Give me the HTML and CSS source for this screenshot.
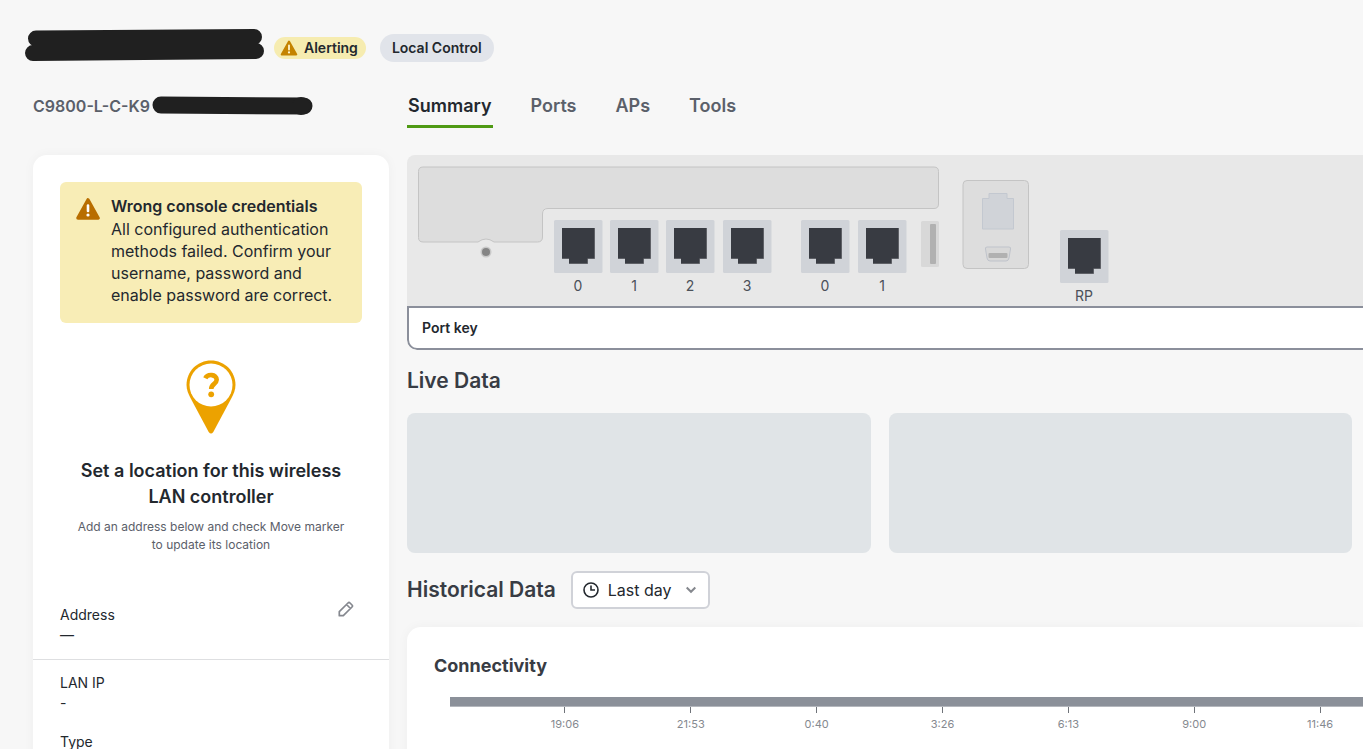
FILE: index.html
```html
<!DOCTYPE html>
<html lang="en">
<head>
    <meta charset="UTF-8">
    <meta name="viewport" content="width=device-width, initial-scale=1.0">
    <title>Wireless LAN controller</title>
    <link rel="stylesheet" href="styles.css">
</head>
<body>

    <div class="page">
        <header class="device-header">
            <svg class="device-name" width="240" height="40" viewBox="0 0 240 40" role="img" aria-label="Device name hidden">
                <path d="M11 10.500 L229 9 M8 25 L231 23" />
            </svg>
            <span class="badge badge-alert">
                <svg width="18" height="16" viewBox="0 0 18 16" aria-hidden="true">
                    <path d="M9 1.500 L16.300 14.500 H1.700 Z" fill="#c48300" stroke="#c48300" stroke-width="2" stroke-linejoin="round" />
                    <path d="M9 5.500 V9.500" stroke="#fff5cf" stroke-width="1.800" stroke-linecap="round" />
                    <circle cx="9" cy="12.400" r="1.100" fill="#fff5cf" />
                </svg>
                Alerting
            </span>
            <span class="badge badge-control">Local Control</span>
        </header>

        <div class="columns subheader">
            <div class="model">
                <span>C9800-L-C-K9</span>
                <svg class="serial" width="162" height="20" viewBox="0 0 162 20" role="img" aria-label="Serial number hidden">
                    <path d="M9 9 L152 10" />
                    <circle cx="149" cy="10" r="9" />
                </svg>
            </div>
            <nav class="tabs">
                <a href="#summary" class="active">Summary</a>
                <a href="#ports">Ports</a>
                <a href="#aps">APs</a>
                <a href="#tools">Tools</a>
            </nav>
        </div>

        <div class="columns content">
            <aside class="card sidebar">
                <div class="alert">
                    <svg width="24" height="22" viewBox="0 0 24 22" aria-hidden="true">
                        <path d="M12 2 L22 20 H2 Z" fill="#b86e00" stroke="#b86e00" stroke-width="3.600" stroke-linejoin="round" />
                        <path d="M12 7.500 V13" stroke="#fff" stroke-width="2.600" stroke-linecap="round" />
                        <circle cx="12" cy="17" r="1.600" fill="#fff" />
                    </svg>
                    <div>
                        <strong>Wrong console credentials</strong>
                        <p>All configured authentication methods failed. Confirm your username, password and enable password are correct.</p>
                    </div>
                </div>

                <div class="location">
                    <svg width="50" height="74" viewBox="0 0 50 74" aria-hidden="true">
                        <path d="M25 0.500 C38.500 0.500 49.500 11.300 49.500 25 C49.500 30 47.500 34 45.500 38 L27.300 72 Q25 75 22.700 72 L4.500 38 C2.500 34 0.500 30 0.500 25 C0.500 11.300 11.500 0.500 25 0.500 Z" fill="#eca200" />
                        <circle cx="25" cy="25" r="21.500" fill="#fff" />
                        <path d="M19.300 18.300 C21.500 13.600 30.700 14 30.700 19.800 C30.700 24 25.200 23.800 25.200 29" fill="none" stroke="#eca200" stroke-width="4.600" />
                        <circle cx="25.200" cy="34.300" r="2.900" fill="#eca200" />
                    </svg>
                    <h3>Set a location for this wireless LAN controller</h3>
                    <p>Add an address below and check Move marker<br>to update its location</p>
                </div>

                <div class="address">
                    <dl class="field">
                        <dt>Address</dt>
                        <dd>—</dd>
                    </dl>
                    <button type="button" class="edit" aria-label="Edit address">
                        <svg width="16" height="16" viewBox="0 0 16 16" fill="none" stroke="#85888f" stroke-width="1.700" stroke-linejoin="round">
                            <path d="M1.300 14.700 V10.700 L10 2 Q11 1 12 2 L14 4 Q15 5 14 6 L5.300 14.700 Z M8.500 3.500 L12.500 7.500" />
                        </svg>
                    </button>
                </div>
                <dl class="field network">
                    <dt>LAN IP</dt>
                    <dd>-</dd>
                    <dt>Type</dt>
                    <dd>-</dd>
                </dl>
            </aside>

            <main>
                <section class="device">
                    <svg class="faceplate" width="956" height="151" viewBox="0 0 956 151" role="img" aria-label="Controller ports">
                        <defs>
                            <g id="port">
                                <rect width="48.500" height="53" rx="1.500" fill="#d0d3d8" />
                                <path d="M8 8 H41 V39 H34 V44 H15 V39 H8 Z" fill="#85878b" />
                                <path d="M8 8 H40.500 V38.500 H33.500 V43.500 H15 V38.500 H8 Z" fill="#383b42" />
                            </g>
                        </defs>

                        <!-- chassis plate -->
                        <path class="plate" d="M16 12 H527 Q531.500 12 531.500 16.500 V49 Q531.500 53.500 527 53.500 H141 Q135.500 53.500 135.500 59 V82 Q135.500 87 130.500 87 H87 Q79 81 71 87 H16 Q11.500 87 11.500 82.500 V16.500 Q11.500 12 16 12 Z" />
                        <circle cx="79" cy="97" r="5.500" fill="#c9c9c9" />
                        <circle cx="79" cy="97" r="4" fill="#858585" />

                        <use href="#port" x="147" y="65" />
                        <use href="#port" x="203" y="65" />
                        <use href="#port" x="259" y="65" />
                        <use href="#port" x="316" y="65" />
                        <use href="#port" x="394" y="65" />
                        <use href="#port" x="451" y="65" />
                        <use href="#port" x="653" y="75" />

                        <!-- usb -->
                        <rect x="514" y="66" width="18" height="46" rx="1.500" fill="#d8d8d8" />
                        <rect x="523" y="69" width="6" height="40" rx="1" fill="#b1b1b1" />

                        <!-- console -->
                        <rect class="plate" x="556" y="25.500" width="65.500" height="88" rx="4" />
                        <path class="socket" d="M575.500 74 V43.500 H582 V38.500 H600 V43.500 H606.500 V74 Z" />
                        <path class="usb-mini" d="M580 92 H602 Q604 92 603.500 94 L602 103 Q601.500 106 599 106 H583 Q580.500 106 580 103 L578.500 94 Q578 92 580 92 Z" />
                        <rect x="581.500" y="98" width="19" height="5" rx="1" fill="#b1b1b1" />

                        <text x="171" y="136">0</text>
                        <text x="227" y="136">1</text>
                        <text x="283" y="136">2</text>
                        <text x="340" y="136">3</text>
                        <text x="418" y="136">0</text>
                        <text x="475" y="136">1</text>
                        <text x="677" y="146">RP</text>
                    </svg>
                    <div class="port-key">Port key</div>
                </section>

                <h2>Live Data</h2>
                <div class="live-grid">
                    <div class="placeholder"></div>
                    <div class="placeholder"></div>
                </div>

                <div class="history-header">
                    <h2>Historical Data</h2>
                    <label class="range">
                        <svg width="16" height="16" viewBox="0 0 16 16" fill="none" stroke="#23282e" stroke-width="1.600" aria-hidden="true">
                            <circle cx="8" cy="8" r="7" />
                            <path d="M8 3.500 V8 H12" />
                        </svg>
                        <select aria-label="Time range">
                            <option>Last day</option>
                            <option>Last week</option>
                        </select>
                        <svg width="10" height="8" viewBox="0 0 10 8" fill="none" stroke="#85888e" stroke-width="2" aria-hidden="true">
                            <path d="M0.700 1.500 L5 5.800 L9.300 1.500" />
                        </svg>
                    </label>
                </div>

                <section class="card connectivity">
                    <h3>Connectivity</h3>
                    <div class="timeline"></div>
                    <div class="axis">
                        <span>19:06</span>
                        <span>21:53</span>
                        <span>0:40</span>
                        <span>3:26</span>
                        <span>6:13</span>
                        <span>9:00</span>
                        <span>11:46</span>
                    </div>
                </section>
            </main>
        </div>
    </div>

</body>
</html>
```

FILE: styles.css
```css
* {
    box-sizing: border-box;
}

body {
    margin: 0;
    background-color: #f7f7f7;
    color: #23282e;
    font-family: Inter, "Liberation Sans", sans-serif;
    font-size: 14px;
    line-height: 20px;
}

h2, h3, p, dl, dd {
    margin: 0;
}

.page {
    display: flex;
    flex-direction: column;
    height: 100vh;
    padding-top: 28px;
    overflow: hidden;
}

.columns {
    display: grid;
    grid-template-columns: 356px minmax(0, 1fr);
    column-gap: 18px;
    padding-left: 33px;
}

/* Header */
.device-header {
    display: flex;
    align-items: center;
    height: 40px;
    padding-left: 25px;
}

.device-name path {
    fill: none;
    stroke: #202020;
    stroke-width: 16;
    stroke-linecap: round;
}

.badge {
    display: flex;
    align-items: center;
    border-radius: 14px;
    font-weight: 600;
}

.badge-alert {
    gap: 6px;
    height: 22px;
    margin-left: 9px;
    padding: 0 8px 0 6px;
    background-color: #f6ecb0;
}

.badge-control {
    height: 28px;
    margin-left: 14px;
    padding: 0 12px;
    background-color: #e1e4ea;
}

.subheader {
    padding-top: 24px;
    margin-bottom: 27px;
}

.model {
    display: flex;
    align-items: center;
    gap: 2px;
    height: 28px;
    color: #5b606a;
    font-size: 16px;
    font-weight: 600;
}

.serial path {
    fill: none;
    stroke: #202020;
    stroke-width: 17;
    stroke-linecap: round;
}

.serial circle {
    fill: #202020;
}

.tabs {
    display: flex;
    gap: 37px;
}

.tabs a {
    height: 36px;
    padding: 0 1px;
    border-bottom: 3px solid transparent;
    color: #5b606a;
    font-size: 18px;
    font-weight: 600;
    line-height: 28px;
    text-decoration: none;
}

.tabs a.active {
    border-bottom-color: #4f9a14;
    color: #23282e;
}

/* Cards */
.content {
    flex: 1;
    min-height: 0;
}

.card {
    background-color: #fff;
    box-shadow: 0 0 12px rgba(0, 0, 0, 0.04);
}

.sidebar {
    border-radius: 14px 14px 0 0;
    padding-top: 27px;
}

.alert {
    display: flex;
    align-items: flex-start;
    gap: 11px;
    margin: 0 27px;
    padding: 12px 16px 17px;
    border-radius: 6px;
    background-color: #f8edb6;
    font-size: 16px;
    line-height: 22px;
}

.alert svg {
    flex-shrink: 0;
    margin-top: 4px;
}

.alert strong {
    display: block;
    font-weight: 600;
    line-height: 24px;
}

.location {
    padding: 37px 36px 51px;
    text-align: center;
}

.location svg {
    display: block;
    margin: 0 auto 24px;
}

.location h3 {
    margin-bottom: 8px;
    font-size: 18px;
    font-weight: 600;
    line-height: 26px;
}

.location p {
    color: #5b606a;
    font-size: 12px;
    line-height: 18px;
}

.address {
    display: flex;
    justify-content: space-between;
    align-items: flex-start;
    padding: 0 35px 14px 27px;
    border-bottom: 1px solid #dedfe1;
}

.edit {
    display: flex;
    margin-top: -4px;
    padding: 0;
    border: 0;
    background: none;
    cursor: pointer;
}

.network {
    padding: 13px 27px;
}

.network dd {
    margin-bottom: 19px;
}

/* Faceplate */
.device {
    overflow: hidden;
    border-radius: 8px 0 0 10px;
    background-color: #e8e8e8;
}

.faceplate {
    display: block;
}

.faceplate text {
    fill: #4b5059;
    font-size: 14px;
    text-anchor: middle;
}

.plate {
    fill: #ddd;
    stroke: #c4c4c4;
}

.socket {
    fill: #d0d3d8;
    stroke: #c3c8d0;
}

.usb-mini {
    fill: #d8d8d8;
    stroke: #bfc3cb;
}

.port-key {
    height: 44px;
    padding-left: 13px;
    border: 2px solid #8b8f9b;
    border-right: 0;
    border-bottom-left-radius: 10px;
    background-color: #fff;
    font-weight: 600;
    line-height: 40px;
}

h2 {
    color: #383c44;
    font-size: 21px;
    font-weight: 600;
    line-height: 26px;
}

.device + h2 {
    margin: 18px 0 19px;
}

.live-grid {
    display: grid;
    grid-template-columns: 1fr 1fr;
    gap: 18px;
    margin-right: 11px;
}

.placeholder {
    height: 140px;
    border-radius: 8px;
    background-color: #e0e4e7;
}

.history-header {
    display: flex;
    align-items: center;
    gap: 15px;
    margin: 18px 0;
}

.range {
    display: flex;
    align-items: center;
    height: 38px;
    padding: 0 12px 0 10px;
    border: 2px solid #d0d2d8;
    border-radius: 6px;
    background-color: #fff;
}

.range select {
    width: 78px;
    margin-left: 9px;
    padding: 0;
    border: 0;
    appearance: none;
    background: none;
    color: inherit;
    font: inherit;
    font-size: 16px;
}

/* Connectivity chart */
.connectivity {
    height: 240px;
    padding: 26px 0 0 27px;
    border-radius: 14px 0 0 0;
}

.connectivity h3 {
    color: #383c44;
    font-size: 18px;
    font-weight: 700;
    line-height: 26px;
}

.timeline {
    height: 10px;
    margin: 18px 0 0 16px;
    border-bottom: 1px solid #b4b7bd;
    background-color: #8b9099;
}

.axis {
    display: grid;
    grid-template-columns: repeat(7, 1fr);
    margin: 0 -20px 0 68px;
    color: #85898f;
    font-size: 11px;
    line-height: 22px;
    text-align: center;
}

.axis span::before {
    content: "";
    display: block;
    width: 1px;
    height: 6px;
    margin: 0 auto;
    background-color: #6f7379;
}
```
